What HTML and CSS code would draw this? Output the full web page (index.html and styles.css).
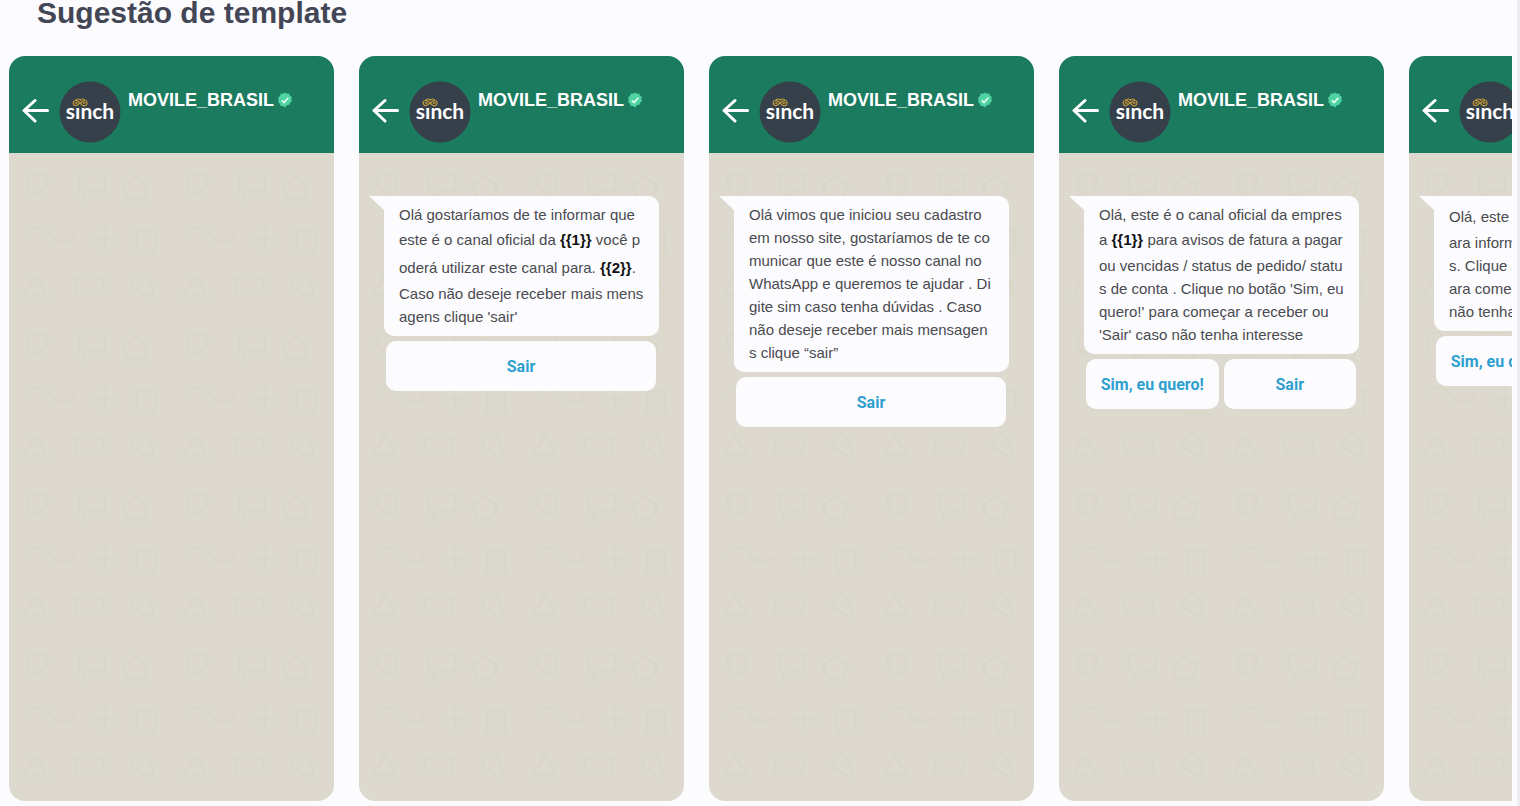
FILE: index.html
```html
<!DOCTYPE html>
<html lang="pt-BR">
<head>
	<meta charset="UTF-8">
	<title>Sugestão de template</title>
	<link rel="stylesheet" href="styles.css">
</head>
<body>
	<svg class="sprite" aria-hidden="true">
		<symbol id="icon-back" viewBox="0 0 28 26">
			<path d="M13 2.500L2 12.500L13 23M2 12.500H25.500" fill="none" stroke="#fff" stroke-width="3" stroke-linecap="round" stroke-linejoin="round"/>
		</symbol>
		<symbol id="logo-sinch" viewBox="0 0 62 62">
			<circle cx="31" cy="31" r="30.500" fill="#35404b"/>
			<path d="M21 21.500C19 24.500 17 25 15.800 24.500C13.500 23.500 13.700 20 16 19.500C18.500 19 20 21 21.500 22.500C23 24.500 25 25.500 27 24.300C29 23 28 19.500 25.800 19.500C23.500 19.500 22.500 21 21.500 22.500M17 19.500C17.500 17.500 21 17.500 21.500 19.500C22 17.500 25.500 17.500 25.800 19.500M18 22.500C18 21.500 16.800 21.300 16.300 22M24.500 22.500C24.500 21.500 25.700 21.300 26.200 22" fill="none" stroke="#c99f35" stroke-width="1.200" stroke-linecap="round"/>
			<text x="31" y="38" text-anchor="middle" class="logo-text">sınch</text>
		</symbol>
		<symbol id="icon-verified" viewBox="0 0 16 16">
			<path d="M8 .5l1.900 1.200 2.200-.1.900 2.100 1.900 1.200-.6 2.100.7 2.200-1.800 1.400-.7 2.200-2.300.1L8 15.500l-2-1.500-2.300-.1-.7-2.200-1.800-1.400.5-2.200-.6-2.100L3 3.700l.9-2.100 2.200.1z" fill="#4fd3a2"/>
			<path d="M4.800 8.300l2.300 2.200 4.200-4.700" fill="none" stroke="#e9fff6" stroke-width="1.600"/>
		</symbol>
	</svg>

	<h1 class="title">Sugestão de template</h1>

	<div class="slider">
		<div class="phone">
			<div class="phone-header">
				<button class="back" type="button" aria-label="Voltar"><svg><use href="#icon-back"/></svg></button>
				<svg class="avatar"><use href="#logo-sinch"/></svg>
				<span class="name">MOVILE_BRASIL</span>
				<svg class="verified"><use href="#icon-verified"/></svg>
			</div>
			<div class="chat"></div>
		</div>

		<div class="phone">
			<div class="phone-header">
				<button class="back" type="button" aria-label="Voltar"><svg><use href="#icon-back"/></svg></button>
				<svg class="avatar"><use href="#logo-sinch"/></svg>
				<span class="name">MOVILE_BRASIL</span>
				<svg class="verified"><use href="#icon-verified"/></svg>
			</div>
			<div class="chat">
				<p class="message">Olá gostaríamos de te informar que este é o canal oficial da <b class="var">{{1}}</b> você poderá utilizar este canal para. <b class="var">{{2}}</b>. Caso não deseje receber mais mensagens clique 'sair'</p>
				<div class="replies">
					<button type="button">Sair</button>
				</div>
			</div>
		</div>

		<div class="phone">
			<div class="phone-header">
				<button class="back" type="button" aria-label="Voltar"><svg><use href="#icon-back"/></svg></button>
				<svg class="avatar"><use href="#logo-sinch"/></svg>
				<span class="name">MOVILE_BRASIL</span>
				<svg class="verified"><use href="#icon-verified"/></svg>
			</div>
			<div class="chat">
				<p class="message">Olá vimos que iniciou seu cadastro em nosso site, gostaríamos de te comunicar que este é nosso canal no WhatsApp e queremos te ajudar . Digite sim caso tenha dúvidas . Caso não deseje receber mais mensagens clique “sair”</p>
				<div class="replies">
					<button type="button">Sair</button>
				</div>
			</div>
		</div>

		<div class="phone">
			<div class="phone-header">
				<button class="back" type="button" aria-label="Voltar"><svg><use href="#icon-back"/></svg></button>
				<svg class="avatar"><use href="#logo-sinch"/></svg>
				<span class="name">MOVILE_BRASIL</span>
				<svg class="verified"><use href="#icon-verified"/></svg>
			</div>
			<div class="chat">
				<p class="message">Olá, este é o canal oficial da empresa <b class="var">{{1}}</b> para avisos de fatura a pagar ou vencidas / status de pedido/ status de conta . Clique no botão 'Sim, eu quero!' para começar a receber ou 'Sair' caso não tenha interesse</p>
				<div class="replies">
					<button type="button">Sim, eu quero!</button>
					<button type="button">Sair</button>
				</div>
			</div>
		</div>

		<div class="phone">
			<div class="phone-header">
				<button class="back" type="button" aria-label="Voltar"><svg><use href="#icon-back"/></svg></button>
				<svg class="avatar"><use href="#logo-sinch"/></svg>
				<span class="name">MOVILE_BRASIL</span>
				<svg class="verified"><use href="#icon-verified"/></svg>
			</div>
			<div class="chat">
				<p class="message">Olá, este é o canal da <b class="var">{{1}}</b> p<br>ara informações e novidade<br>s. Clique no 'Sim, eu quero!' p<br>ara começar ou 'Sair' caso<br>não tenha interesse</p>
				<div class="replies">
					<button type="button">Sim, eu quero!</button>
					<button type="button">Sair</button>
				</div>
			</div>
		</div>
	</div>
</body>
</html>
```

FILE: styles.css
```css
*{
	margin: 0;
	padding: 0;
	box-sizing: border-box;
}
body{
	height: 100vh;
	display: flex;
	flex-direction: column;
	padding: 0 5px 5px 9px;
	border-right: 3px solid #eeeef2;
	background: #fcfcff;
	font-family: "Liberation Sans", Arial, sans-serif;
	overflow: hidden;
}
.sprite{
	display: none;
}
.title{
	padding-left: 28px;
	margin-bottom: 30px;
	font-size: 30px;
	line-height: 26px;
	color: #434655;
}
.slider{
	flex: 1;
	display: flex;
	gap: 25px;
	overflow: hidden;
}
.phone{
	flex: 0 0 325px;
	display: flex;
	flex-direction: column;
	border-radius: 16px;
	overflow: hidden;
}

/* cabeçalho */
.phone-header{
	height: 97px;
	padding: 25px 13px 10px;
	display: flex;
	align-items: flex-start;
	background: #1b7b5f;
}
.back{
	width: 28px;
	height: 26px;
	margin: 17px 9px 0 0;
	border: 0;
	background: none;
	cursor: pointer;
}
.back svg{
	display: block;
	width: 28px;
	height: 26px;
}
.avatar{
	width: 62px;
	height: 62px;
	margin-right: 7px;
}
.logo-text{
	font: bold 21px Lato, sans-serif;
	fill: #fff;
}
.name{
	margin: 8px 3px 0 0;
	font-size: 18px;
	line-height: 22px;
	font-weight: bold;
	color: #fff;
}
.verified{
	width: 16px;
	height: 16px;
	margin-top: 11px;
}

/* conversa */
.chat{
	flex: 1;
	padding: 43px 25px;
	background: #ddd9ce url("data:image/svg+xml,%3Csvg xmlns='http://www.w3.org/2000/svg' width='160' height='160' fill='none' stroke='%23dad7ca' stroke-width='3'%3E%3Ccircle cx='28' cy='30' r='10'/%3E%3Cpath d='M70 20h26v18H82l-8 8v-8h-4zM126 24l12 8-4 14h-16l-4-14zM18 82q12-16 24 0t24 0M96 74v24m-12-12h24M128 78h18v22h-18zM26 122l12 20H14zM66 124h28v16H66zM122 132q12-22 20 0t-20 0'/%3E%3C/svg%3E");
}
.message{
	position: relative;
	padding: 7px 15px 8px;
	border-radius: 0 10px 10px 10px;
	background: #fcfcff;
	font-size: 15px;
	line-height: 23px;
	color: #4a4a4f;
	word-break: break-all;
}
.message::before{
	content: "";
	position: absolute;
	left: -15px;
	top: 0;
	width: 15px;
	height: 14px;
	background: #fcfcff;
	clip-path: polygon(0 0, 100% 0, 100% 100%);
}
.var{
	display: inline-block;
	padding: 2px 0 3px;
	color: #111;
}
.replies{
	display: flex;
	gap: 5px;
	margin: 5px 3px 0 2px;
}
.replies button{
	flex: 1 1 0;
	height: 50px;
	border: 0;
	border-radius: 10px;
	background: #fcfcff;
	font: bold 16px Roboto, sans-serif;
	color: #2f9fd0;
	white-space: nowrap;
	cursor: pointer;
}
```
